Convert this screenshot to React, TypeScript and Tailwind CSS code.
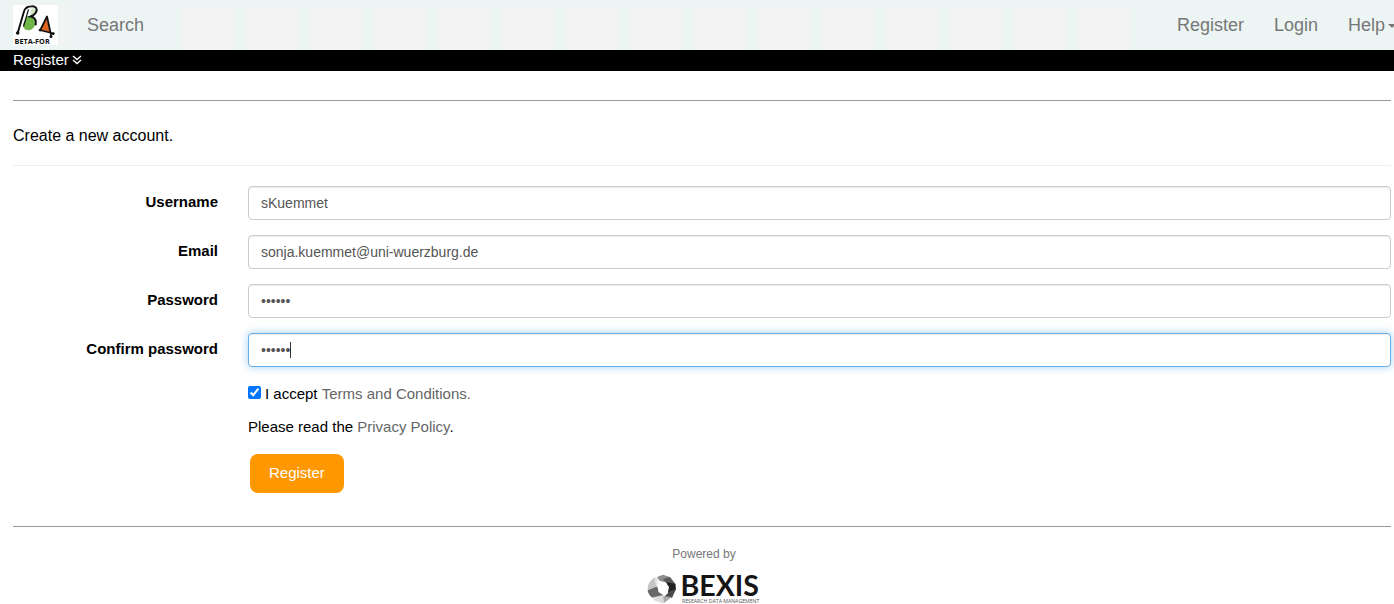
import React from "react";

const navLink = "text-[18px] leading-5 text-[#777777]";
const inputBase =
  "block h-[34px] w-full rounded border bg-white px-3 text-[14px] leading-5 text-[#555555] outline-none";
const inputIdle = "border-[#cccccc] shadow-[inset_0_1px_1px_rgba(0,0,0,0.075)]";
const inputActive =
  "border-[#66afe9] shadow-[inset_0_1px_1px_rgba(0,0,0,0.075),0_0_8px_rgba(102,175,233,0.6)]";

function BetaForLogo() {
  return (
    <svg viewBox="0 0 45 40" className="block h-10 w-[45px]" role="img" aria-label="BETA-FOR">
      <rect width="45" height="40" fill="#ffffff" />
      <path d="M18 4.500c2-2.200 5.500-1.200 5 2-.4 2.700-3 4.700-6 5.500Z" fill="#cfe6c0" />
      <path
        d="M13.500 12.500c3.500-3 8.500-1.500 9 3.500.5 5-3 9-7 9.200-4 .2-6-3-5-6.700Z"
        fill="#6fb548"
      />
      <path
        d="M4.700 28 11 6.500c1-3.500 3.700-5.300 7.500-5.300 4.500-.2 6 2.500 4.700 5.600-1 2.300-3 3.700-5.500 4.700 3.800.5 6 3.500 5 8"
        fill="none"
        stroke="#111111"
        strokeWidth="2"
        strokeLinecap="round"
      />
      <path d="m15.500 4.500-5 17" stroke="#111111" strokeWidth="1.200" />
      <path d="m13.500 4.500-5.500 19" stroke="#ffffff" strokeWidth="1" />
      <path d="m33.500 12.500 3.500 15-9.500-2.500Z" fill="#dd6320" />
      <path
        d="M27 25.500 34 11.500 38 30M26.500 25l14 3.500"
        fill="none"
        stroke="#111111"
        strokeWidth="1.800"
        strokeLinecap="round"
        strokeLinejoin="round"
      />
      <circle cx="4.700" cy="28" r="1.800" fill="#111111" />
      <circle cx="38" cy="31.500" r="1.500" fill="#111111" />
      <circle cx="40.200" cy="28.700" r="1.400" fill="#111111" />
      <text
        x="1.500"
        y="38.500"
        fontSize="7.300"
        fontWeight="700"
        fontFamily="Open Sans, sans-serif"
        fill="#111111"
      >
        BETA-FOR
      </text>
    </svg>
  );
}

function BexisLogo() {
  return (
    <svg viewBox="0 0 115 30" className="block h-[30px] w-[115px] overflow-visible" role="img" aria-label="BEXIS research data management">
      <path d="M10 3 16 .8 23 3l-4.500 5.500L10 6Z" fill="#8d8d8d" />
      <path d="m16 5 7-2 5.500 7-5.500 4Z" fill="#5a5a5a" />
      <path d="m20 8 8.500 2 .5 6-8 3Z" fill="#222222" />
      <path d="m29 15-4 9-8-1 6-6Z" fill="#4a4a4a" />
      <path d="m25 23-8 6-5-1 4-6Z" fill="#a8a8a8" />
      <path d="m17 29-9-2-3-4 11-3Z" fill="#dcdcdc" />
      <path d="m.7 16 9-4 7 9L5 23.500C2.500 21.500 1 19 .7 16Z" fill="#686868" />
      <path d="M.7 16C.5 10 3 6 8 3.500l2.500 9Z" fill="#c4c4c4" />
      <path d="M8 3.500 10.500 3l1.500 4-1.500 5.500-2-1.500Z" fill="#e4e4e4" />
      <path d="m11 4.500 2 4.500 5.500-.5 3.500 4.500-1 5-5 3-4.500-3-1-5.500Z" fill="#ffffff" />
      <text x="33.500" y="22" fontSize="28.500" fontWeight="700" fontFamily="Lato, sans-serif" fill="#151515">
        BEXIS
      </text>
      <text x="35" y="29" fontSize="5.200" fontFamily="Open Sans, sans-serif" fill="#555555">
        RESEARCH DATA MANAGEMENT
      </text>
    </svg>
  );
}

type FieldProps = {
  id: string;
  label: string;
  type: string;
  value: string;
  active?: boolean;
};

function Field({ id, label, type, value, active = false }: FieldProps) {
  return (
    <div className="flex gap-[30px]">
      <label htmlFor={id} className="w-[205px] shrink-0 pt-[6px] text-right text-[15px] leading-5 font-bold">
        {label}
      </label>
      <div className="relative min-w-0 flex-1">
        <input
          id={id}
          type={type}
          defaultValue={value}
          className={`${inputBase} ${active ? inputActive : inputIdle}`}
        />
        {active && <span aria-hidden="true" className="absolute top-[9px] left-[42px] h-4 w-px bg-[#333333]" />}
      </div>
    </div>
  );
}

export default function App() {
  return (
    <div className="bg-white font-['Liberation_Sans',Arial,sans-serif] text-[15px] leading-5 text-black">
      <header className="flex h-[50px] items-center overflow-hidden bg-[#ecf5f4] pl-[13px]">
        <a href="#home" className="shrink-0">
          <BetaForLogo />
        </a>
        <div aria-hidden="true" className="mt-[5px] h-10 w-3 shrink-0 self-start bg-[#f0f4f3]" />
        <nav className="flex min-w-0 flex-1 items-center">
          <a href="#search" className={`ml-[17px] w-[95px] shrink-0 ${navLink}`}>
            Search
          </a>
          <div aria-hidden="true" className="flex h-[50px] min-w-0 flex-1 gap-3 overflow-hidden pt-2 pb-px">
            {Array.from({ length: 15 }, (_, i) => (
              <span key={i} className="w-[52px] shrink-0 bg-[#f3f3f3]" />
            ))}
          </div>
          <div className="flex shrink-0 gap-[30px] pl-4">
            <a href="#register" className={navLink}>
              Register
            </a>
            <a href="#login" className={navLink}>
              Login
            </a>
            <button type="button" className={`flex items-center gap-[3px] ${navLink}`}>
              Help
              <svg viewBox="0 0 8 4" className="mt-[2px] -mr-[2px] h-1 w-2" aria-hidden="true">
                <path d="M0 0h8L4 4Z" fill="#777777" />
              </svg>
            </button>
          </div>
        </nav>
      </header>
      <div className="flex h-[21px] items-start bg-black pl-[13px] text-white">
        <button type="button" className="flex items-center gap-[3px]">
          Register
          <svg viewBox="0 0 10 10" className="h-[10px] w-[10px]" fill="none" stroke="#ffffff" strokeWidth="1.5" aria-hidden="true">
            <path d="m1 1 4 3.500L9 1M1 5l4 3.500L9 5" />
          </svg>
        </button>
      </div>

      <main className="pt-[29px] pr-[3px] pl-[13px]">
        <hr className="border-[#999999]" />
        <h1 className="pt-6 text-[16px] leading-[22px]">Create a new account.</h1>
        <hr className="mt-[18px] mb-5 border-[#eeeeee]" />
        <form onSubmit={(e) => e.preventDefault()}>
          <div className="flex flex-col gap-[15px]">
            <Field id="username" label="Username" type="text" value="sKuemmet" />
            <Field id="email" label="Email" type="text" value="sonja.kuemmet@uni-wuerzburg.de" />
            <Field id="password" label="Password" type="password" value="secret" />
            <Field id="confirm" label="Confirm password" type="password" value="secret" active />
          </div>
          <div className="pt-[17px] pl-[235px]">
            <div className="flex items-center">
              <input id="terms" type="checkbox" defaultChecked className="mr-1 mb-[3px] h-[13px] w-[13px] accent-[#0075ff]" />
              <label htmlFor="terms">I accept&nbsp;</label>
              <a href="#terms-text" className="text-[#666666]">
                Terms and Conditions.
              </a>
            </div>
            <p className="mt-[13px]">
              Please read the{" "}
              <a href="#privacy" className="text-[#666666]">
                Privacy Policy
              </a>
              .
            </p>
            <button type="submit" className="mt-[17px] ml-[2px] block h-[39px] rounded-lg bg-[#ff9800] px-[19px] pb-px text-white">
              Register
            </button>
          </div>
        </form>
        <hr className="mt-[33px] border-[#999999]" />
      </main>
      <footer className="flex flex-col items-center pt-[17px] pl-[14px]">
        <span className="text-[12px] leading-5 text-[#777777]">Powered by</span>
        <a href="#bexis" className="mt-[10px]">
          <BexisLogo />
        </a>
      </footer>
    </div>
  );
}
